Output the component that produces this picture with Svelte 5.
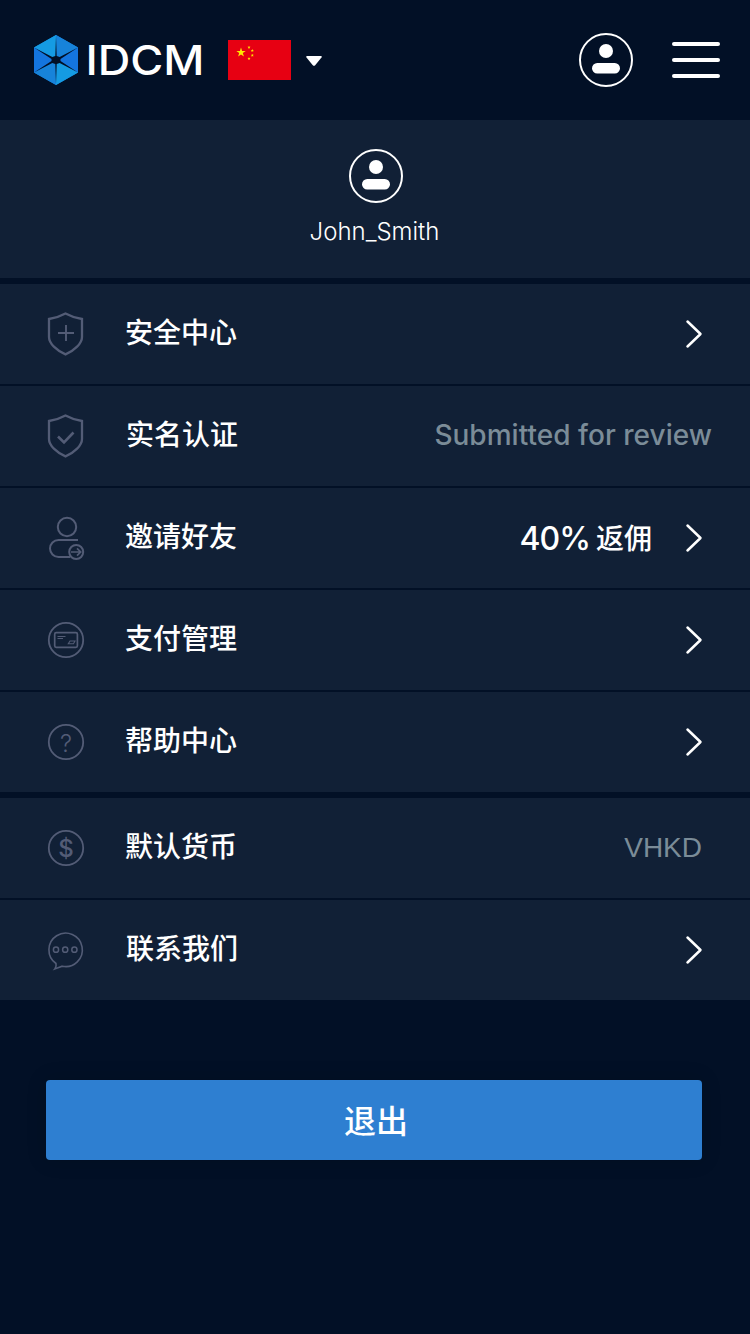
<script>
  const groups = [
    [
      { icon: 'shieldPlus', label: '安全中心', arrow: true },
      { icon: 'shieldCheck', label: '实名认证', status: 'Submitted for review', shift: true },
      { icon: 'invite', label: '邀请好友', rate: '40%', rateLabel: '返佣', arrow: true },
      { icon: 'card', label: '支付管理', arrow: true },
      { icon: 'help', label: '帮助中心', arrow: true }
    ],
    [
      { icon: 'currency', label: '默认货币', currency: 'VHKD' },
      { icon: 'chat', label: '联系我们', arrow: true, shift: true }
    ]
  ];
</script>

{#snippet avatar()}
  <svg class="avatar" width="54" height="54" viewBox="0 0 54 54">
    <circle cx="27" cy="27" r="26" fill="none" stroke="#fff" stroke-width="2" />
    <circle cx="27" cy="18" r="7" fill="#fff" />
    <rect x="13" y="30" width="28" height="10.5" rx="5.25" fill="#fff" />
  </svg>
{/snippet}

<div class="page">
  <header>
    <svg class="logo" width="180" height="60" viewBox="0 0 180 60">
      <polygon points="26,5 48,17.5 48,42.5 26,55 4,42.5 4,17.5" fill="#1683dc" />
      <polygon points="26,5 26,30 4,17.5" fill="#159be3" />
      <polygon points="26,5 48,17.5 26,30" fill="#1783da" />
      <polygon points="48,17.5 48,42.5 26,30" fill="#1475df" />
      <polygon points="48,42.5 26,55 26,30" fill="#159be3" />
      <polygon points="26,55 4,42.5 26,30" fill="#1783da" />
      <polygon points="4,42.5 4,17.5 26,30" fill="#1475df" />
      <path
        d="M26 6l.7 20 3 1L48 17.500 30.500 29v2l17.500 11.500-18.300-9.500-3 1-.7 20-.7-20-3-1L4 42.500 21.500 31v-2L4 17.500 22.300 27l3-1z"
        fill="#021026"
      />
      <text x="55.500" y="45" textLength="119" lengthAdjust="spacingAndGlyphs">IDCM</text>
    </svg>
    <svg class="flag" width="63" height="40" viewBox="0 0 63 40">
      <rect width="63" height="40" fill="#e70012" />
      <g fill="#ffe800">
        <path d="M13 7.500l1.100 3.400h3.600l-2.900 2.100 1.100 3.500-2.900-2.100-2.900 2.100 1.100-3.500-2.900-2.100h3.600z" />
        <path d="M21 5.800l.4 1h1.100l-.8.800.3 1.100-1-.6-1 .6.300-1.100-.8-.8h1.100z" />
        <path d="M24.300 9l.4 1h1.100l-.8.800.3 1.100-1-.6-1 .6.300-1.100-.8-.8h1.100z" />
        <path d="M24.300 13.800l.4 1h1.100l-.8.800.3 1.100-1-.6-1 .6.300-1.100-.8-.8h1.100z" />
        <path d="M21 17l.4 1h1.100l-.8.800.3 1.100-1-.6-1 .6.300-1.100-.8-.8h1.100z" />
      </g>
    </svg>
    <svg class="caret" width="16" height="10" viewBox="0 0 16 10">
      <path d="M.8 0h14.400q1.100.6.300 1.600L9.200 9.200q-1.200 1.200-2.400 0L.5 1.600Q-.3.600.8 0z" fill="#fff" />
    </svg>
    <div class="actions">
      {@render avatar()}
      <div class="burger"><i></i><i></i><i></i></div>
    </div>
  </header>

  <section class="profile">
    {@render avatar()}
    <div class="name">John_Smith</div>
  </section>

  {#each groups as group}
    <nav>
      {#each group as item}
        <div class="row">
          <svg class="icon" width="40" height="44" viewBox="0 0 40 44">
            {#if item.icon === 'shieldPlus' || item.icon === 'shieldCheck'}
              <path
                d="M19.500 1.600Q27.500 6 36 7v18C36 31.500 28.500 38.500 19.500 42.400 10.500 38.500 3 31.500 3 25V7Q11.500 6 19.500 1.600z"
                stroke-width="2.300"
              />
              {#if item.icon === 'shieldPlus'}
                <path d="M20 13v16M12 21h16" stroke-width="1.900" />
              {:else}
                <path d="M12 22.500l6 6 9.500-10" stroke-width="2.600" />
              {/if}
            {:else if item.icon === 'invite'}
              <circle cx="21" cy="11" r="9.200" />
              <path d="M32 24H12.500a8.500 8.500 0 0 0 0 17H24" />
              <circle cx="30.200" cy="36" r="7" />
              <path d="M25 36h9.500M31 32.300l3.700 3.700-3.700 3.700" stroke-width="1.700" />
            {:else if item.icon === 'chat'}
              <path
                d="M9.300 35.500A16.700 16.700 0 1 1 15.500 38.200L8.200 40.900Q10 38.500 9.300 35.500z"
                stroke-width="1.600"
                transform="translate(.7 0)"
              />
              <circle cx="10" cy="21.700" r="2.600" stroke-width="1.500" />
              <circle cx="19.200" cy="21.700" r="2.600" stroke-width="1.500" />
              <circle cx="28.400" cy="21.700" r="2.600" stroke-width="1.500" />
            {:else}
              <circle cx="20" cy="22" r="17.200" stroke-width="1.800" />
              {#if item.icon === 'card'}
                <rect x="8.700" y="14.700" width="22.700" height="14.600" rx="1.500" stroke-width="1.700" />
                <path d="M11.500 18.500h8M11.500 20.500h5.500M24 23h5l-1.500 2.700h-5.200z" stroke-width="1.100" />
              {:else if item.icon === 'help'}
                <text class="mark question" x="20" y="31.500">?</text>
              {:else}
                <text class="mark" x="20" y="30.500">$</text>
              {/if}
            {/if}
          </svg>
          <span class="label" class:shift={item.shift}>{item.label}</span>
          {#if item.status}<span class="status">{item.status}</span>{/if}
          {#if item.rate}<span class="rate">{item.rate}</span><span class="rate-label">{item.rateLabel}</span>{/if}
          {#if item.currency}<span class="currency">{item.currency}</span>{/if}
          {#if item.arrow}
            <svg class="arrow" width="18" height="30" viewBox="0 0 18 30">
              <path d="M2.500 2.500L15.500 15 2.500 27.500" />
            </svg>
          {/if}
        </div>
      {/each}
    </nav>
  {/each}

  <button>退出</button>
</div>

<style>
  :global(body) {
    background: #021026;
  }
  .page {
    width: 750px;
    height: 1334px;
    display: flex;
    flex-direction: column;
    background: #021026;
    color: #fff;
    font-family: Inter, 'Noto Sans CJK SC', sans-serif;
    overflow: hidden;
  }
  svg {
    display: block;
    flex: none;
  }
  header {
    height: 120px;
    box-sizing: border-box;
    padding: 0 30px;
    display: flex;
    align-items: center;
    flex: none;
  }
  .logo text {
    fill: #fff;
    font: 500 41px Inter, sans-serif;
  }
  .flag {
    margin-left: 18px;
  }
  .caret {
    margin: 2px 0 0 15px;
  }
  .actions {
    margin-left: auto;
    display: flex;
    align-items: center;
    gap: 39px;
  }
  .burger {
    width: 48px;
    display: grid;
    gap: 12px;
  }
  .burger i {
    height: 4px;
    border-radius: 2px;
    background: #fff;
  }
  .profile {
    height: 158px;
    box-sizing: border-box;
    padding: 29px 0 0 2px;
    display: flex;
    flex-direction: column;
    align-items: center;
    flex: none;
    background: #112036;
  }
  .name {
    margin: 14px 3px 0 0;
    font-size: 24px;
    font-weight: 300;
    line-height: 30px;
  }
  nav {
    display: flex;
    flex-direction: column;
    gap: 2px;
    margin-top: 6px;
  }
  .row {
    height: 100px;
    box-sizing: border-box;
    padding: 0 47px 0 46px;
    display: flex;
    align-items: center;
    background: #112036;
  }
  .icon {
    fill: none;
    stroke: #535c76;
    stroke-width: 2;
  }
  .icon .mark {
    fill: #535c76;
    stroke: none;
    font: 500 24px Inter, sans-serif;
    text-anchor: middle;
  }
  .icon .question {
    font-weight: 300;
  }
  .label {
    margin: 0 auto 6px 39px;
    font-family: 'Noto Sans CJK SC', sans-serif;
    font-size: 28px;
    font-weight: 500;
    line-height: 40px;
  }
  .label.shift {
    margin-left: 40px;
  }
  .status,
  .currency {
    color: #7b8c98;
    font-size: 28px;
    line-height: 34px;
    white-space: nowrap;
  }
  .status {
    margin: 0 -9px 2px 0;
    font-weight: 500;
    letter-spacing: 0.03px;
  }
  .currency {
    margin-right: 1px;
    font-family: 'Liberation Sans', sans-serif;
  }
  .rate {
    font-size: 32px;
    font-weight: 500;
    letter-spacing: -1px;
  }
  .rate-label {
    margin: 0 33px 2px 6px;
    font-family: 'Noto Sans CJK SC', sans-serif;
    font-size: 28px;
    font-weight: 500;
    line-height: 40px;
  }
  .arrow path {
    fill: none;
    stroke: #fff;
    stroke-width: 2.5;
    stroke-linecap: round;
    stroke-linejoin: round;
  }
  button {
    width: 656px;
    height: 80px;
    margin: 80px 0 0 46px;
    padding: 0 0 2px 4px;
    border: 0;
    border-radius: 4px;
    background: #2e7fd1;
    box-shadow: 0 0 20px rgba(0, 0, 0, 0.15);
    color: #fff;
    font-family: 'Noto Sans CJK SC', sans-serif;
    font-size: 32px;
    font-weight: 500;
    line-height: 78px;
  }
</style>
